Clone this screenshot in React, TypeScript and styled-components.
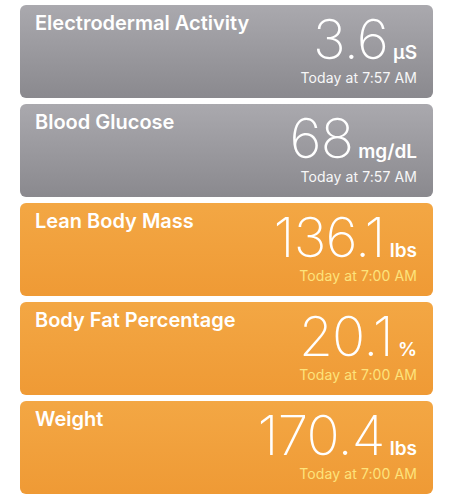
import React from "react";
import styled, { createGlobalStyle } from "styled-components";

const Global = createGlobalStyle`
  html, body { margin: 0; padding: 0; background: #ffffff; }
  body { font-family: "Inter", "Noto Sans", "Liberation Sans", sans-serif; -webkit-font-smoothing: antialiased; }
`;

type Tone = "gray" | "orange";

const List = styled.div`
  display: flex;
  flex-direction: column;
  gap: 6px;
  padding: 5px 19px 0 20px;
  width: 413px;
`;

const Card = styled.div<{ $tone: Tone }>`
  height: 93px;
  box-sizing: border-box;
  border-radius: 6px;
  display: flex;
  justify-content: space-between;
  padding: 6px 16px 0 15px;
  color: #ffffff;
  background: ${(p) =>
    p.$tone === "gray"
      ? "linear-gradient(180deg, #aaa9ae 0%, #8a898e 100%)"
      : "linear-gradient(180deg, #f3a744 0%, #ef9a35 100%)"};
`;

const Title = styled.div`
  font-size: 20px;
  font-weight: 600;
  line-height: 24px;
`;

const Right = styled.div`
  display: flex;
  flex-direction: column;
  align-items: flex-end;
`;

const ValueRow = styled.div`
  display: flex;
  align-items: baseline;
  gap: 5px;
  height: 56px;
`;

const Number = styled.span`
  font-size: 55px;
  font-weight: 250;
  line-height: 56px;
  letter-spacing: -0.8px;
`;

const Unit = styled.span`
  font-size: 19px;
  font-weight: 600;
  line-height: 20px;
`;

const Time = styled.div<{ $tone: Tone }>`
  margin-top: 3px;
  font-size: 14px;
  line-height: 16px;
  font-weight: 400;
  letter-spacing: 0.1px;
  color: ${(p) => (p.$tone === "gray" ? "#f7f7f8" : "#fde37c")};
`;

const items: { title: string; value: string; unit: string; time: string; tone: Tone }[] = [
  { title: "Electrodermal Activity", value: "3.6", unit: "µS", time: "Today at 7:57 AM", tone: "gray" },
  { title: "Blood Glucose", value: "68", unit: "mg/dL", time: "Today at 7:57 AM", tone: "gray" },
  { title: "Lean Body Mass", value: "136.1", unit: "lbs", time: "Today at 7:00 AM", tone: "orange" },
  { title: "Body Fat Percentage", value: "20.1", unit: "%", time: "Today at 7:00 AM", tone: "orange" },
  { title: "Weight", value: "170.4", unit: "lbs", time: "Today at 7:00 AM", tone: "orange" },
];

export default function App() {
  return (
    <>
      <Global />
      <List>
        {items.map((it) => (
          <Card key={it.title} $tone={it.tone}>
            <Title>{it.title}</Title>
            <Right>
              <ValueRow>
                <Number>{it.value}</Number>
                <Unit>{it.unit}</Unit>
              </ValueRow>
              <Time $tone={it.tone}>{it.time}</Time>
            </Right>
          </Card>
        ))}
      </List>
    </>
  );
}
